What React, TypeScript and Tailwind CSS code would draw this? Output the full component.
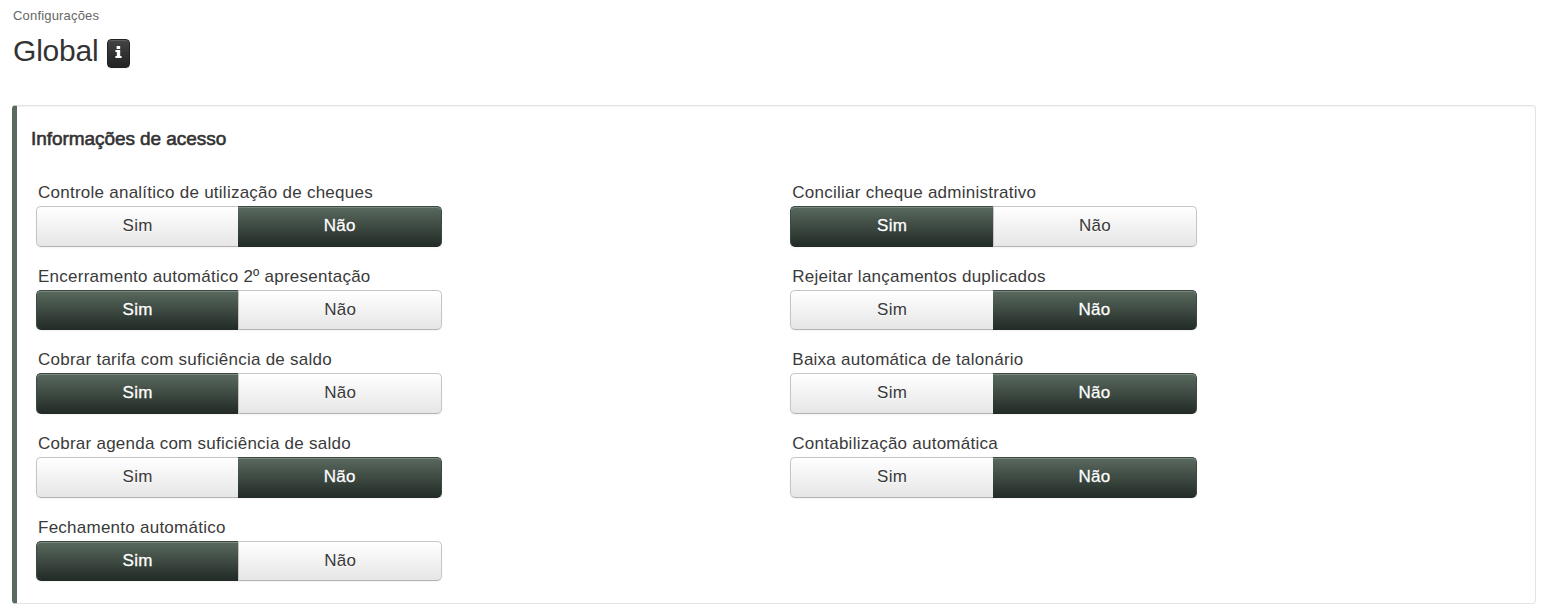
import { useState } from "react";
import clsx from "clsx";

type Option = "Sim" | "Não";

type Setting = {
  label: string;
  value: Option;
};

const leftSettings: Setting[] = [
  { label: "Controle analítico de utilização de cheques", value: "Não" },
  { label: "Encerramento automático 2º apresentação", value: "Sim" },
  { label: "Cobrar tarifa com suficiência de saldo", value: "Sim" },
  { label: "Cobrar agenda com suficiência de saldo", value: "Não" },
  { label: "Fechamento automático", value: "Sim" },
];

const rightSettings: Setting[] = [
  { label: "Conciliar cheque administrativo", value: "Sim" },
  { label: "Rejeitar lançamentos duplicados", value: "Não" },
  { label: "Baixa automática de talonário", value: "Não" },
  { label: "Contabilização automática", value: "Não" },
];

const options: Option[] = ["Sim", "Não"];

const InfoIcon = () => (
  <svg width="7" height="12" viewBox="0 0 7 12" fill="currentColor">
    <rect x="1.6" y="0" width="3.6" height="3" rx="0.5" />
    <path d="M0.4 4h4.8v6h1.4v2H0.4v-2h1.4V6H0.4z" />
  </svg>
);

const Toggle = ({ label, value }: Setting) => {
  const [selected, setSelected] = useState<Option>(value);

  return (
    <div className="h-[83.7px]">
      <p className="h-[26px] pl-[2px] text-[17px] leading-[26px] tracking-[0.25px] whitespace-nowrap text-[#3a3a3a]">
        {label}
      </p>

      <div className="flex h-[40.7px] rounded-[5px] shadow-[0_1px_2px_rgba(0,0,0,0.05)]">
        {options.map((option) => (
          <button
            key={option}
            type="button"
            onClick={() => setSelected(option)}
            className={clsx(
              "h-full border bg-linear-to-b pb-px text-[17px] tracking-[0.3px]",
              option === "Sim"
                ? "w-[49.85%] rounded-l-[5px] border-r-0"
                : "flex-1 rounded-r-[5px]",
              selected === option
                ? "border-[#3c4a42] border-b-[#222b26] from-[#5a6a5f] to-[#232c27] text-white shadow-[inset_0_1px_0_rgba(255,255,255,0.2)] [-webkit-text-stroke:0.3px_white] [text-shadow:0_-1px_0_rgba(0,0,0,0.25)]"
                : "border-[#c5c5c5] border-b-[#b3b3b3] from-white to-[#e6e6e6] text-[#3a3a3a] [text-shadow:0_1px_1px_rgba(255,255,255,0.75)]",
              selected === option && option === "Não" && "border-l-0"
            )}
          >
            {option}
          </button>
        ))}
      </div>
    </div>
  );
};

const App = () => {
  return (
    <main className="h-[615px] overflow-hidden bg-white pr-[18px] pl-3 font-['Liberation_Sans',Arial,sans-serif] text-[#333]">
      {/* Page title */}
      <header className="h-[105px] pt-[7px] pl-px">
        <p className="text-[13px] leading-[18px] tracking-[0.18px] text-[#666]">
          Configurações
        </p>

        <div className="mt-[6px] flex items-start">
          <h1 className="w-[94px] text-[30px] leading-[40px] tracking-[-0.2px]">
            Global
          </h1>

          <button
            type="button"
            className="mt-[8px] flex h-[29px] w-[23px] justify-center rounded-[4px] border border-[#222] bg-linear-to-b from-[#444] to-[#222] pt-[6px] text-white shadow-[inset_0_1px_0_rgba(255,255,255,0.15),0_1px_2px_rgba(0,0,0,0.05)]"
          >
            <InfoIcon />
          </button>
        </div>
      </header>

      {/* Settings panel */}
      <section className="h-[499px] rounded-[4px] border border-l-[5px] border-[#e3e3e3] border-l-[#5a6a5f] pt-[21px] shadow-[inset_0_1px_1px_rgba(0,0,0,0.05)]">
        <h2 className="pl-[14px] text-[19px] leading-[24px] tracking-[-0.06px] [-webkit-text-stroke:0.6px_#333]">
          Informações de acesso
        </h2>

        <div className="mt-[29px] flex pl-[19px]">
          <div className="w-[406px]">
            {leftSettings.map((item) => (
              <Toggle key={item.label} {...item} />
            ))}
          </div>

          <div className="ml-[348.3px] w-[406.7px]">
            {rightSettings.map((item) => (
              <Toggle key={item.label} {...item} />
            ))}
          </div>
        </div>
      </section>
    </main>
  );
};

export default App;
